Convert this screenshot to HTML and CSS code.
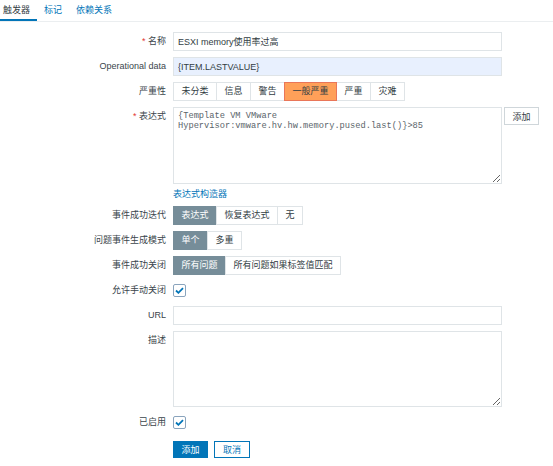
FILE: index.html
```html
<!DOCTYPE html>
<html lang="zh">
<head>
<meta charset="utf-8">
<title>触发器</title>
<link rel="stylesheet" href="styles.css">
</head>
<body>
<nav class="tabs">
  <a class="tab tab-active">触发器</a>
  <a class="tab">标记</a>
  <a class="tab">依赖关系</a>
</nav>
<form class="form">
  <div class="row">
    <label class="lbl"><span class="req">*</span> 名称</label>
    <input class="text" type="text" value="ESXI memory使用率过高">
  </div>
  <div class="row">
    <label class="lbl">Operational data</label>
    <input class="text text-fill" type="text" value="{ITEM.LASTVALUE}">
  </div>
  <div class="row">
    <label class="lbl">严重性</label>
    <div class="seg">
      <span class="seg-item">未分类</span><span class="seg-item">信息</span><span class="seg-item">警告</span><span class="seg-item seg-avg">一般严重</span><span class="seg-item">严重</span><span class="seg-item">灾难</span>
    </div>
  </div>
  <div class="row">
    <label class="lbl"><span class="req">*</span> 表达式</label>
    <div class="col">
      <div class="expr-line">
        <textarea class="area area-expr">{Template VM VMware Hypervisor:vmware.hv.hw.memory.pused.last()}&gt;85</textarea>
        <button type="button" class="btn-grey">添加</button>
      </div>
      <a class="link">表达式构造器</a>
    </div>
  </div>
  <div class="row">
    <label class="lbl">事件成功迭代</label>
    <div class="seg">
      <span class="seg-item seg-on">表达式</span><span class="seg-item">恢复表达式</span><span class="seg-item">无</span>
    </div>
  </div>
  <div class="row">
    <label class="lbl">问题事件生成模式</label>
    <div class="seg">
      <span class="seg-item seg-on">单个</span><span class="seg-item">多重</span>
    </div>
  </div>
  <div class="row">
    <label class="lbl">事件成功关闭</label>
    <div class="seg">
      <span class="seg-item seg-on">所有问题</span><span class="seg-item">所有问题如果标签值匹配</span>
    </div>
  </div>
  <div class="row">
    <label class="lbl">允许手动关闭</label>
    <span class="check"><svg width="9" height="7" viewBox="0 0 9 7"><polyline points="1,3.5 3.4,5.8 8,1.2" fill="none" stroke="#0275b8" stroke-width="1.8"/></svg></span>
  </div>
  <div class="row">
    <label class="lbl">URL</label>
    <input class="text" type="text" value="">
  </div>
  <div class="row">
    <label class="lbl">描述</label>
    <textarea class="area area-desc"></textarea>
  </div>
  <div class="row">
    <label class="lbl">已启用</label>
    <span class="check"><svg width="9" height="7" viewBox="0 0 9 7"><polyline points="1,3.5 3.4,5.8 8,1.2" fill="none" stroke="#0275b8" stroke-width="1.8"/></svg></span>
  </div>
  <div class="row row-actions">
    <span class="lbl"></span>
    <div class="actions">
      <button type="button" class="btn-main">添加</button>
      <button type="button" class="btn-alt">取消</button>
    </div>
  </div>
</form>
</body>
</html>
```

FILE: styles.css
```css
html, body {
  margin: 0;
  padding: 0;
  background: #ffffff;
}

body {
  font-family: "Liberation Sans", "Noto Sans CJK SC", sans-serif;
  font-size: 9px;
  color: #323d43;
}

.tabs {
  display: flex;
  gap: 4px;
  height: 21px;
  border-bottom: 1px solid #ebeef0;
}

.tab {
  box-sizing: border-box;
  height: 21px;
  line-height: 20px;
  padding: 0 7px 0 3px;
  color: #0275b8;
  cursor: pointer;
}

.tab-active {
  color: #323d43;
  border-bottom: 2px solid #0275b8;
}

.form {
  display: flex;
  flex-direction: column;
  gap: 6px;
  margin-top: 10px;
}

.row {
  display: flex;
  align-items: flex-start;
  gap: 7px;
  min-height: 19px;
}

.lbl {
  flex: none;
  width: 166px;
  text-align: right;
  line-height: 19px;
  color: #3a454b;
}

.req {
  color: #e33734;
}

.text {
  box-sizing: border-box;
  width: 329px;
  height: 19px;
  margin: 0;
  padding: 0 4px;
  border: 1px solid #dfe4e7;
  background: #ffffff;
  font-family: inherit;
  font-size: 9px;
  color: #323d43;
  outline: none;
}

.text-fill {
  background: #e8f0fe;
}

.seg {
  display: flex;
  height: 19px;
}

.seg-item {
  box-sizing: border-box;
  height: 19px;
  line-height: 17px;
  padding: 0 7.5px;
  border: 1px solid #dfe4e7;
  margin-left: -1px;
  background: #ffffff;
  color: #323d43;
  white-space: nowrap;
}

.seg-item:first-child {
  margin-left: 0;
}

.seg-on {
  background: #768d99;
  border-color: #768d99;
  color: #ffffff;
}

.seg-avg {
  background: #ffa059;
  border-color: #e97659;
  color: #323d43;
  position: relative;
}

.col {
  display: flex;
  flex-direction: column;
  align-items: flex-start;
}

.expr-line {
  display: flex;
  align-items: flex-start;
  gap: 2px;
}

.area {
  box-sizing: border-box;
  width: 329px;
  margin: 0;
  padding: 4px;
  border: 1px solid #dfe4e7;
  background: #ffffff;
  outline: none;
  display: block;
}

.area-expr {
  height: 77px;
  font-family: "Liberation Mono", "Noto Sans CJK SC", monospace;
  font-size: 8.7px;
  line-height: 9.5px;
  color: #5a646a;
}

.area-desc {
  height: 76px;
  font-family: inherit;
  font-size: 9px;
}

.btn-grey {
  box-sizing: border-box;
  height: 18px;
  width: 35px;
  padding: 0;
  border: 1px solid #cfd6da;
  background: #ffffff;
  color: #323d43;
  font-family: inherit;
  font-size: 9px;
}

.link {
  margin-top: 4px;
  line-height: 12px;
  color: #0275b8;
  cursor: pointer;
}

.check {
  box-sizing: border-box;
  width: 13px;
  height: 13px;
  margin-top: 3px;
  border: 1px solid #8aa4bd;
  border-radius: 2px;
  background: #ffffff;
  display: flex;
  align-items: center;
  justify-content: center;
}

.row-actions {
  margin-top: 3px;
}

.actions {
  display: flex;
  gap: 6px;
}

.btn-main,
.btn-alt {
  box-sizing: border-box;
  height: 17px;
  width: 35px;
  padding: 0;
  font-family: inherit;
  font-size: 9px;
  border: 1px solid #0275b8;
}

.btn-main {
  background: #0275b8;
  color: #ffffff;
}

.btn-alt {
  width: 36px;
  background: #ffffff;
  color: #0275b8;
}
```
